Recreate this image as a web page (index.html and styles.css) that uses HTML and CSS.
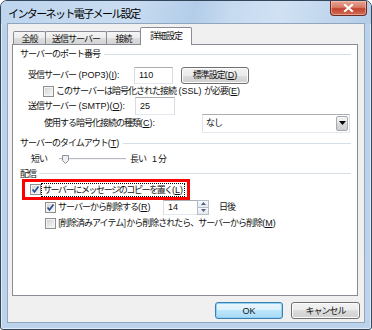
FILE: index.html
```html
<!DOCTYPE html>
<html lang="ja">
<head>
  <meta charset="UTF-8" />
  <title>インターネット電子メール設定</title>
  <link rel="stylesheet" href="styles.css">
</head>
<body>

  <div class="window">
    <div class="titlebar">
      <span class="title">インターネット電子メール設定</span>
      <div class="close">
        <svg width="11" height="8" viewBox="0 0 11 8"><path d="M2 1 L9 7 M9 1 L2 7" stroke="#fff" stroke-width="2.2" stroke-linecap="square"/></svg>
      </div>
    </div>

    <div class="client">
      <div class="tabs">
        <div class="tab t1">全般</div>
        <div class="tab t2">送信サーバー</div>
        <div class="tab t3">接続</div>
        <div class="tab active">詳細設定</div>
      </div>

      <div class="panel">
        <div class="group g1"><span>サーバーのポート番号</span></div>

        <div class="row pop">
          <span class="label lbl-pop">受信サーバー<span class="en"> (POP3)(<u>I</u>):</span></span>
          <span class="field f-pop"><span class="en">110</span></span>
          <span class="btn btn-std">標準設定<span class="en">(<u>D</u>)</span></span>
        </div>

        <div class="row ssl">
          <span class="check"></span>
          <span class="label">このサーバーは暗号化された接続<span class="en"> (SSL) </span>が必要<span class="en">(<u>E</u>)</span></span>
        </div>

        <div class="row smtp">
          <span class="label lbl-smtp">送信サーバー<span class="en"> (SMTP)(<u>O</u>):</span></span>
          <span class="field f-smtp"><span class="en">25</span></span>
        </div>

        <div class="row enc">
          <span class="label lbl-enc">使用する暗号化接続の種類<span class="en">(<u>C</u>):</span></span>
          <span class="select">
            <span class="select-text">なし</span>
            <span class="drop">
              <svg width="7" height="4" viewBox="0 0 7 4"><path d="M0 0 H7 L3.5 4 Z" fill="#000"/></svg>
            </span>
          </span>
        </div>

        <div class="group g2"><span>サーバーのタイムアウト<span class="en">(<u>T</u>)</span></span></div>

        <div class="row timeout">
          <span class="label">短い</span>
          <span class="slider">
            <svg class="thumb" width="7" height="9" viewBox="0 0 7 9"><path d="M0.5 0.5 H6.5 V5.5 L3.5 8.5 L0.5 5.5 Z" fill="#eef0f3" stroke="#8a8f99"/></svg>
          </span>
          <span class="label long">長い</span>
          <span class="label minutes"><span class="en">1</span> 分</span>
        </div>

        <div class="group g3"><span>配信</span></div>

        <div class="row copy">
          <span class="check checked">
            <svg width="11" height="11" viewBox="0 0 11 11"><path d="M2.5 5.5 L4.5 7.8 L8.5 2.5" stroke="#2c4f94" stroke-width="1.7" fill="none"/></svg>
          </span>
          <span class="label focus">サーバーにメッセージのコピーを置く<span class="en">(<u>L</u>)</span></span>
        </div>

        <div class="row remove">
          <span class="check checked">
            <svg width="11" height="11" viewBox="0 0 11 11"><path d="M2.5 5.5 L4.5 7.8 L8.5 2.5" stroke="#2c4f94" stroke-width="1.7" fill="none"/></svg>
          </span>
          <span class="label lbl-remove">サーバーから削除する<span class="en">(<u>R</u>)</span></span>
          <span class="spinner">
            <span class="field f-days"><span class="en">14</span></span>
            <span class="spin">
              <span class="spin-btn"><svg width="5" height="3" viewBox="0 0 5 3"><path d="M0 3 L2.5 0 L5 3 Z" fill="#4d6185"/></svg></span>
              <span class="spin-btn"><svg width="5" height="3" viewBox="0 0 5 3"><path d="M0 0 H5 L2.5 3 Z" fill="#4d6185"/></svg></span>
            </span>
          </span>
          <span class="label days">日後</span>
        </div>

        <div class="row deleted">
          <span class="check"></span>
          <span class="label">[削除済みアイテム] から削除されたら、サーバーから削除<span class="en">(<u>M</u>)</span></span>
        </div>
      </div>

      <div class="buttons">
        <span class="btn btn-ok"><span class="en">OK</span></span>
        <span class="btn btn-cancel">キャンセル</span>
      </div>
    </div>
  </div>

</body>
</html>
```

FILE: styles.css
```css
body {
  margin: 0;
  font-family: "Noto Sans CJK JP", sans-serif;
  font-size: 9px;
  letter-spacing: -1px;
  line-height: 12px;
  color: #111;
  background: #fff;
}

.en {
  font-family: "Liberation Sans", "Noto Sans CJK JP", sans-serif;
  font-size: 9px;
  letter-spacing: 0;
}

u {
  text-decoration-thickness: 1px;
  text-underline-offset: 1px;
}

/* window frame */

.window {
  width: 372px;
  height: 330px;
  box-sizing: border-box;
  border: 1px solid #34465a;
  border-radius: 7px 7px 3px 3px;
  background: linear-gradient(180deg, #c6daef 0, #b9d1ea 30px, #bcd3eb 100%);
  box-shadow: inset 0 0 0 1px #e2ecf7;
  display: flex;
  flex-direction: column;
  overflow: hidden;
}

.titlebar {
  height: 23px;
  flex: none;
  display: flex;
  align-items: center;
  padding-left: 7px;
  background: linear-gradient(105deg, #bed5ee 0%, #c9dcf1 35%, #b3cde9 52%, #c6daf0 62%, #d0e1f3 75%, #b4cde8 100%);
}

.title {
  font-size: 11px;
  letter-spacing: -1.6px;
  color: #000;
}

.close {
  margin-left: auto;
  margin-right: 4px;
  align-self: flex-start;
  width: 37px;
  height: 15px;
  box-sizing: border-box;
  border: 1px solid #6b2b24;
  border-top: none;
  border-radius: 0 0 4px 4px;
  background: linear-gradient(180deg, #e8a593 0%, #d77b67 45%, #c4442f 55%, #d06d55 100%);
  box-shadow: inset 0 0 0 1px rgba(255, 210, 200, 0.5);
  display: flex;
  align-items: center;
  justify-content: center;
}

.client {
  margin: 0 7px;
  height: 298px;
  box-sizing: border-box;
  padding: 3px 6px 0 4px;
  background: #f0f0f0;
  box-shadow: 0 0 0 1px #8fa6be;
}

/* tabs */

.tabs {
  display: flex;
  align-items: flex-end;
  height: 17px;
  padding-left: 1px;
}

.tab {
  height: 13px;
  box-sizing: border-box;
  border: 1px solid #898c95;
  border-bottom: none;
  margin-right: -1px;
  border-radius: 2px 2px 0 0;
  background: linear-gradient(180deg, #f5f5f5 0%, #ececec 50%, #dedede 50%, #d4d4d4 100%);
  display: flex;
  align-items: center;
  justify-content: center;
  padding-top: 1px;
}

.t1 { width: 33px; }
.t2 { width: 62px; }
.t3 { width: 35px; }

.tab.active {
  width: 52px;
  height: 18px;
  margin-bottom: -1px;
  background: #fff;
  align-items: flex-start;
  padding-top: 2px;
  position: relative;
  z-index: 1;
}

/* panel */

.panel {
  height: 252px;
  box-sizing: border-box;
  border: 1px solid #898c95;
  background: #fff;
  padding: 0 6px 0 7px;
  display: flex;
  flex-direction: column;
}

.group {
  display: flex;
  align-items: center;
  height: 12px;
  flex: none;
}

.group::after {
  content: "";
  flex: 1;
  height: 1px;
  background: #d5dfe5;
  margin-left: 4px;
}

.g1 { margin-top: 3px; }
.g2 { margin-top: 5px; }
.g3 { margin-top: 2px; height: 11px; }

.row {
  display: flex;
  align-items: center;
  flex: none;
}

.label {
  white-space: nowrap;
}

.pop { height: 18px; margin-top: 6px; }
.ssl { height: 14px; }
.smtp { height: 16px; }
.enc { height: 18px; }
.timeout { height: 14px; margin-top: 3px; }
.remove { height: 14px; }
.deleted { height: 14px; margin-top: 2px; }

.lbl-pop { margin-left: 8px; width: 106px; flex: none; }
.lbl-smtp { margin-left: 8px; width: 107px; flex: none; }
.lbl-enc { margin-left: 24px; width: 158px; flex: none; }

.field {
  box-sizing: border-box;
  border: 1px solid #abadb3;
  border-left-color: #dadce2;
  border-right-color: #dadce2;
  border-bottom-color: #e3e9ef;
  background: #fff;
  display: flex;
  align-items: center;
  padding-left: 4px;
  flex: none;
}

.f-pop { width: 39px; height: 17px; }
.f-smtp { width: 40px; height: 18px; }

.btn {
  box-sizing: border-box;
  border: 1px solid #707070;
  border-radius: 3px;
  background: linear-gradient(180deg, #f2f2f2 0%, #ebebeb 50%, #dddddd 50%, #cfcfcf 100%);
  box-shadow: inset 0 0 0 1px #fbfbfb;
  display: flex;
  align-items: center;
  justify-content: center;
  flex: none;
}

.btn-std {
  margin-left: 8px;
  width: 68px;
  height: 17px;
}

/* checkboxes */

.check {
  width: 11px;
  height: 11px;
  box-sizing: border-box;
  border: 1px solid #8e8f8f;
  background: linear-gradient(135deg, #cfcfcf 0%, #e6e6e6 50%, #f8f8f8 100%);
  box-shadow: inset 0 0 0 1px #f4f4f4;
  flex: none;
  margin-right: 2px;
  display: flex;
  align-items: center;
  justify-content: center;
}

.check svg {
  margin: -1px;
}

.ssl .check { margin-left: 23px; }
.remove .check,
.deleted .check { margin-left: 25px; }

/* select */

.select {
  width: 148px;
  height: 19px;
  box-sizing: border-box;
  border: 1px solid #abadb3;
  border-bottom-color: #e3e9ef;
  border-left-color: #e2e3ea;
  border-right-color: #dbdfe6;
  background: #fff;
  display: flex;
  align-items: center;
  padding: 1px;
}

.select-text {
  flex: 1;
  padding-left: 2px;
}

.drop {
  width: 12px;
  height: 15px;
  box-sizing: border-box;
  border: 1px solid #a4a9b3;
  border-radius: 2px;
  background: linear-gradient(180deg, #f4f4f4 0%, #e8e8e8 50%, #d9d9d9 50%, #cfcfcf 100%);
  display: flex;
  align-items: center;
  justify-content: center;
}

/* timeout slider */

.timeout .label:first-child {
  margin-left: 11px;
}

.slider {
  width: 67px;
  height: 9px;
  margin-left: 12px;
  flex: none;
  display: flex;
  align-items: center;
  background: linear-gradient(180deg, transparent 3px, #b7bcc4 3px, #b7bcc4 4px, #f3f3f3 4px, #f3f3f3 5px, transparent 5px);
}

.thumb {
  margin-left: 3px;
}

.long { margin-left: 4px; }
.minutes { margin-left: 6px; }

/* delivery */

.copy {
  height: 21px;
  width: 168px;
  box-sizing: border-box;
  margin-left: 2px;
  border: 3px solid #ff0000;
}

.copy .check {
  margin-left: 5px;
  margin-right: 1px;
}

.focus {
  outline: 1px dotted #000;
  outline-offset: 0;
  padding: 0 1px;
  line-height: 12px;
  letter-spacing: -1.4px;
}

.lbl-remove {
  width: 105px;
  flex: none;
}

.spinner {
  display: flex;
  height: 15px;
  flex: none;
}

.f-days {
  width: 34px;
  height: 15px;
  border-right: none;
}

.spin {
  width: 12px;
  height: 15px;
  display: flex;
  flex-direction: column;
}

.spin-btn {
  flex: 1;
  box-sizing: border-box;
  border: 1px solid #b5bdc9;
  background: linear-gradient(180deg, #f7f9fb, #e3e8ef);
  display: flex;
  align-items: center;
  justify-content: center;
}

.spin-btn + .spin-btn {
  border-top: none;
}

.days { margin-left: 10px; }

/* dialog buttons */

.buttons {
  display: flex;
  justify-content: flex-end;
  gap: 8px;
  margin-top: 6px;
  margin-right: -2px;
}

.btn-ok {
  width: 68px;
  height: 17px;
  border-color: #3c7fb1;
  background: linear-gradient(180deg, #eaf6fd 0%, #d9f0fc 50%, #bee6fd 50%, #a7d9f5 100%);
  box-shadow: inset 0 0 0 1px #8fd2f3;
}

.btn-cancel {
  width: 69px;
  height: 17px;
}
```
